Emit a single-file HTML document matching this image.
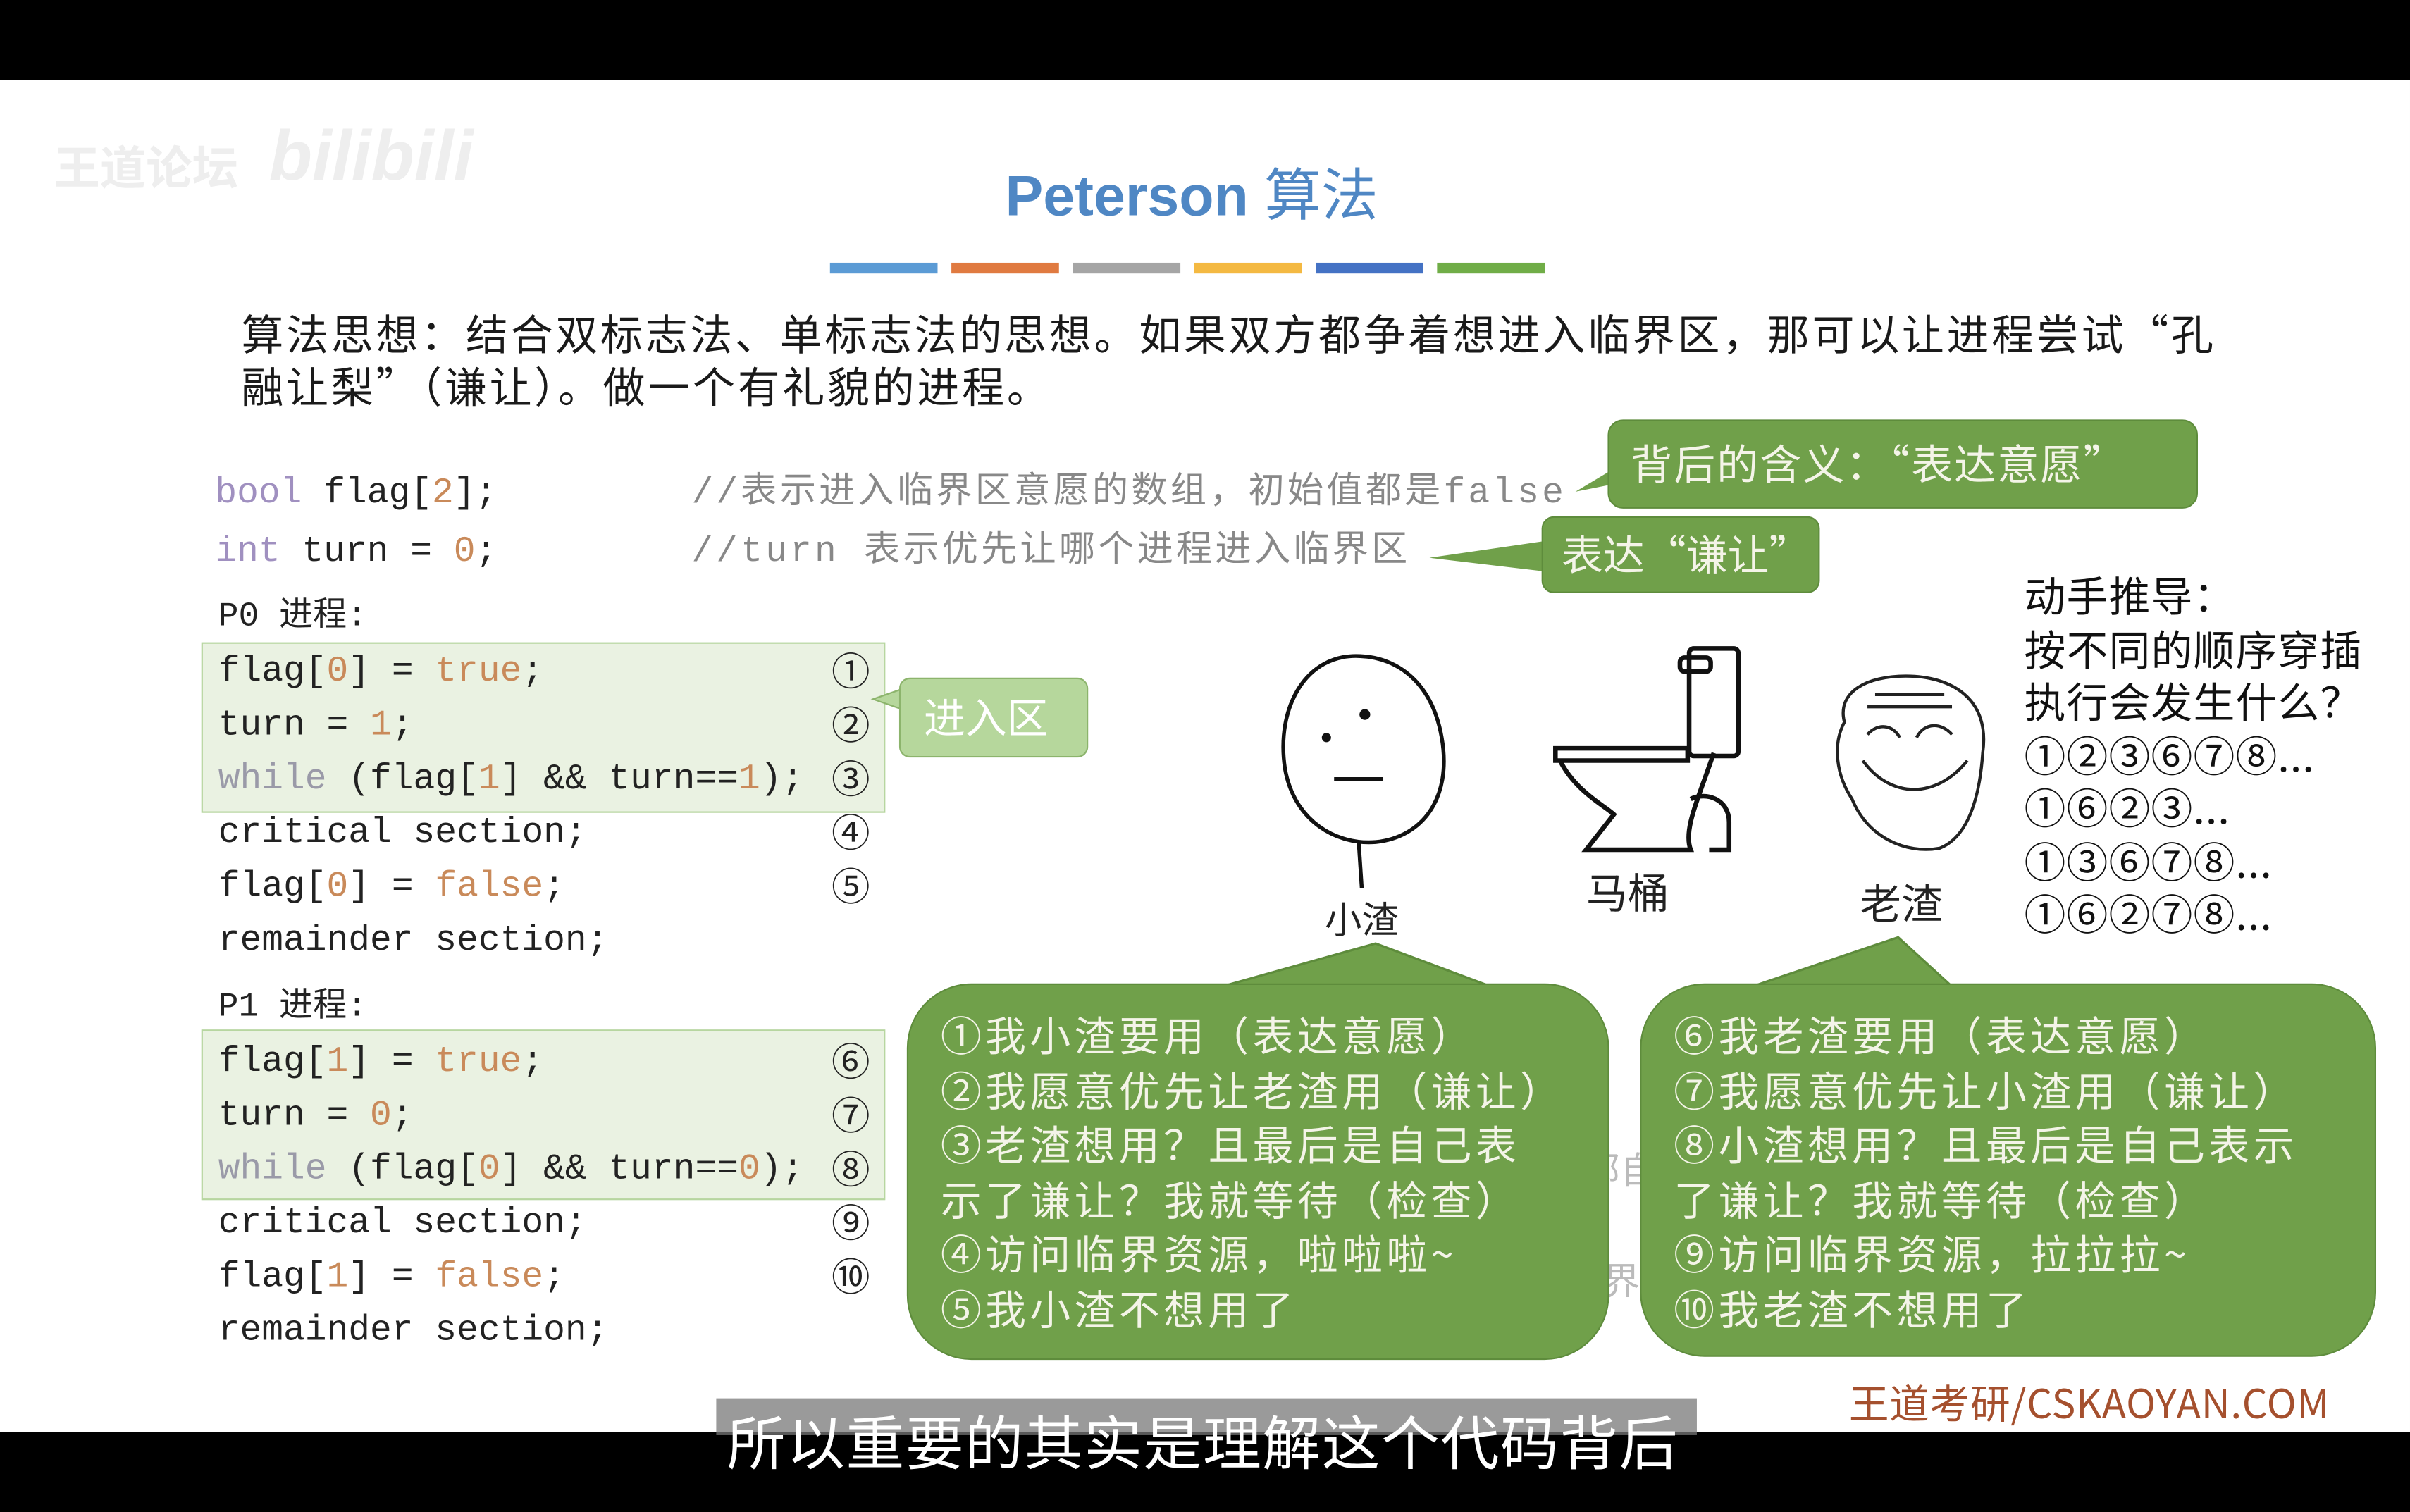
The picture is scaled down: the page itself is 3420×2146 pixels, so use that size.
<!DOCTYPE html>
<html><head><meta charset="utf-8"><style>
html,body{margin:0;padding:0;background:#000;overflow:hidden}
#s{position:absolute;left:0;top:0;width:1568px;height:984px;transform-origin:0 0;transform:scale(2.18112,2.18089);background:#000;font-family:"Liberation Sans","Noto Sans CJK SC",sans-serif}
#w{position:absolute;left:0;top:52px;width:1568px;height:880px;background:#fff}
.a{position:absolute;white-space:nowrap;line-height:1}
.m{font-family:"Liberation Mono","DejaVu Sans Mono","Noto Sans CJK SC",monospace;font-size:23.5px;color:#222}
.cn{font-family:"Noto Sans CJK SC",sans-serif}
.o{color:#c98a5a}.p{color:#a090c0}.g{color:#999}.k{color:#9a9aa8}
.n{position:absolute;left:541px;font-size:25px;color:#222;font-family:"Noto Sans CJK SC",sans-serif}
.b{position:absolute;background:#70a04a;border:1.5px solid #5e8c3c;color:#f4f4e8;font-family:"Noto Sans CJK SC",sans-serif}
.bt{font-size:26.5px;line-height:35.5px;letter-spacing:2.5px}
</style></head><body><div id="s">
<div id="w"></div>
<div class="a cn" style="left:35px;top:92px;font-size:30px;color:#eee;font-weight:bold">王道论坛</div>
<div class="a" style="left:175px;top:78px;font-size:46px;color:#eee;font-weight:bold;font-style:italic">bilibili</div>
<div class="a" style="left:654px;top:106px;font-size:37px;font-weight:bold;color:#4f87c4">Peterson <span class="cn" style="font-weight:normal">算法</span></div>
<div style="position:absolute;top:171px;left:540px;width:70px;height:7px;background:#5b9bd5"></div>
<div style="position:absolute;top:171px;left:619px;width:70px;height:7px;background:#e07a40"></div>
<div style="position:absolute;top:171px;left:698px;width:70px;height:7px;background:#a5a5a5"></div>
<div style="position:absolute;top:171px;left:777px;width:70px;height:7px;background:#f4b942"></div>
<div style="position:absolute;top:171px;left:856px;width:70px;height:7px;background:#4472c4"></div>
<div style="position:absolute;top:171px;left:935px;width:70px;height:7px;background:#70ad47"></div>
<div class="a cn" style="left:157px;top:199px;font-size:27.5px;color:#1a1a1a;line-height:34px;white-space:normal;width:1330px;letter-spacing:1.7px">算法思想：结合双标志法、单标志法的思想。如果双方都争着想进入临界区，那可以让进程尝试“孔<br>融让梨”（谦让）。做一个有礼貌的进程。</div>
<div class="a m" style="left:140px;top:310px"><span class="p">bool</span> flag[<span class="o">2</span>];</div>
<div class="a m" style="left:140px;top:348px"><span class="p">int</span> turn = <span class="o">0</span>;</div>
<div class="a m g" style="left:450px;top:310px;color:#888;letter-spacing:1.9px">//表示进入临界区意愿的数组，初始值都是false</div>
<div class="a m g" style="left:450px;top:348px;color:#888;letter-spacing:1.9px">//turn 表示优先让哪个进程进入临界区</div>
<div class="a m" style="left:142px;top:391px;font-size:22px">P0 进程:</div>
<div style="position:absolute;left:131px;top:418px;width:443px;height:109px;background:#eaf2e2;border:1px solid #b7d6a0"></div>
<div class="a m" style="left:142px;top:426px">flag[<span class="o">0</span>] = <span class="o">true</span>;</div>
<div class="a m" style="left:142px;top:461px">turn = <span class="o">1</span>;</div>
<div class="a m" style="left:142px;top:496px"><span class="k">while</span> (flag[<span class="o">1</span>] &amp;&amp; turn==<span class="o">1</span>);</div>
<div class="a m" style="left:142px;top:531px">critical section;</div>
<div class="a m" style="left:142px;top:566px">flag[<span class="o">0</span>] = <span class="o">false</span>;</div>
<div class="a m" style="left:142px;top:601px">remainder section;</div>
<div class="a n" style="top:424px">①</div><div class="a n" style="top:459px">②</div><div class="a n" style="top:494px">③</div><div class="a n" style="top:529px">④</div><div class="a n" style="top:564px">⑤</div>
<div class="a m" style="left:142px;top:645px;font-size:22px">P1 进程:</div>
<div style="position:absolute;left:131px;top:670px;width:443px;height:109px;background:#eaf2e2;border:1px solid #b7d6a0"></div>
<div class="a m" style="left:142px;top:680px">flag[<span class="o">1</span>] = <span class="o">true</span>;</div>
<div class="a m" style="left:142px;top:715px">turn = <span class="o">0</span>;</div>
<div class="a m" style="left:142px;top:750px"><span class="k">while</span> (flag[<span class="o">0</span>] &amp;&amp; turn==<span class="o">0</span>);</div>
<div class="a m" style="left:142px;top:785px">critical section;</div>
<div class="a m" style="left:142px;top:820px">flag[<span class="o">1</span>] = <span class="o">false</span>;</div>
<div class="a m" style="left:142px;top:855px">remainder section;</div>
<div class="a n" style="top:678px">⑥</div><div class="a n" style="top:713px">⑦</div><div class="a n" style="top:748px">⑧</div><div class="a n" style="top:783px">⑨</div><div class="a n" style="top:818px">⑩</div>
<svg style="position:absolute;left:0;top:0" width="1568" height="984">
<polygon points="1050,305 1025,320 1050,315" fill="#70a04a"/>
<polygon points="1006,352 930,363 1006,372" fill="#70a04a"/>
<polygon points="588,448 568,455 588,462" fill="#b6d79c" stroke="#8cb46c"/>
<polygon points="795,642 895,614 970,642" fill="#70a04a" stroke="#5e8c3c" stroke-width="1.5"/>
<polygon points="1140,642 1235,610 1270,642" fill="#70a04a" stroke="#5e8c3c" stroke-width="1.5"/>
<path d="M885,427 C850,425 830,460 836,500 C842,535 870,550 895,548 C925,545 945,520 938,480 C932,445 910,428 885,427 Z" fill="none" stroke="#111" stroke-width="2.5"/>
<circle cx="863" cy="480" r="3" fill="#111"/><circle cx="888" cy="465" r="3.5" fill="#111"/>
<path d="M868,507 L900,507" stroke="#111" stroke-width="2.5"/>
<path d="M884,548 L886,578" stroke="#111" stroke-width="2.5"/>
<g fill="none" stroke="#111" stroke-width="3">
<rect x="1099" y="422" width="32" height="70" rx="3"/><rect x="1093" y="428" width="20" height="9" rx="3"/>
<path d="M1012,487 L1098,487 L1098,495 L1012,495 Z"/>
<path d="M1015,495 C1025,515 1045,525 1050,530 L1032,553 L1100,553 C1095,540 1105,520 1115,490"/>
<path d="M1100,520 C1110,515 1125,520 1125,535 L1125,553 L1112,553"/>
</g>
<g fill="none" stroke="#222" stroke-width="2">
<path d="M1200,470 C1195,450 1215,440 1240,440 C1270,440 1295,455 1290,490 C1288,520 1280,545 1262,552 C1240,556 1215,545 1205,520 C1195,505 1192,485 1200,470 Z"/>
<path d="M1215,478 C1222,470 1232,472 1236,480 M1247,480 C1252,470 1263,470 1270,478"/>
<path d="M1212,495 C1230,520 1260,520 1280,495"/>
<path d="M1215,460 L1270,460 M1220,452 L1265,452"/>
</g>
</svg>
<div class="b" style="left:1046px;top:273px;width:382px;height:56px;border-radius:10px"><div class="a" style="left:14px;top:13px;font-size:27px;letter-spacing:1px">背后的含义：“表达意愿”</div></div>
<div class="b" style="left:1003px;top:336px;width:179px;height:48px;border-radius:8px"><div class="a" style="left:12px;top:9px;font-size:27px">表达“谦让”</div></div>
<div style="position:absolute;left:585px;top:441px;width:121px;height:50px;border-radius:7px;background:#b6d79c;border:1px solid #8cb46c"><div class="a cn" style="left:15px;top:10px;font-size:27px;color:#fff">进入区</div></div>
<div class="a cn" style="left:862px;top:585px;font-size:24px;color:#222">小渣</div>
<div class="a cn" style="left:1032px;top:566px;font-size:27px;color:#222">马桶</div>
<div class="a cn" style="left:1210px;top:573px;font-size:27px;color:#222">老渣</div>
<div class="a cn" style="left:1317px;top:370px;font-size:27px;color:#111;line-height:34.5px;letter-spacing:0.5px">动手推导：<br>按不同的顺序穿插<br>执行会发生什么？<br>①②③⑥⑦⑧...<br>①⑥②③...<br>①③⑥⑦⑧...<br>①⑥②⑦⑧...</div>
<div class="a cn" style="left:1030px;top:748px;font-size:24px;color:#bbb">部自</div>
<div class="a cn" style="left:1043px;top:820px;font-size:24px;color:#bbb">界</div>
<div class="b" style="left:590px;top:640px;width:455px;height:243px;border-radius:42px"><div class="a bt" style="left:21px;top:14px">①我小渣要用（表达意愿）<br>②我愿意优先让老渣用（谦让）<br>③老渣想用？且最后是自己表<br>示了谦让？我就等待（检查）<br>④访问临界资源，啦啦啦~<br>⑤我小渣不想用了</div></div>
<div class="b" style="left:1067px;top:640px;width:477px;height:241px;border-radius:42px"><div class="a bt" style="left:21px;top:14px">⑥我老渣要用（表达意愿）<br>⑦我愿意优先让小渣用（谦让）<br>⑧小渣想用？且最后是自己表示<br>了谦让？我就等待（检查）<br>⑨访问临界资源，拉拉拉~<br>⑩我老渣不想用了</div></div>
<div class="a cn" style="left:1203px;top:900px;font-size:26px;color:#a5502e;letter-spacing:0.3px">王道考研/CSKAOYAN.COM</div>
<div style="position:absolute;left:466px;top:910px;width:638px;height:24px;background:rgba(120,120,120,0.75)"></div>
<div class="a cn" style="left:473px;top:918px;font-size:38px;color:#fff;letter-spacing:0.7px">所以重要的其实是理解这个代码背后</div>
</div></body></html>
